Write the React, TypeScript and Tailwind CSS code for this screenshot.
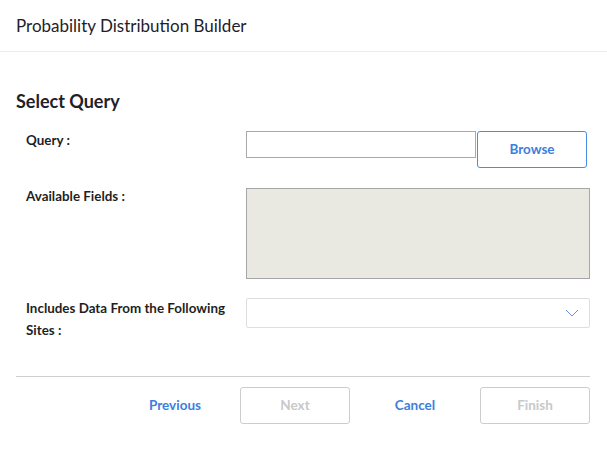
import React from "react";

const blue = "text-[#3b7ee0]";

function FieldRow({ label, children, className = "" }: { label: React.ReactNode; children: React.ReactNode; className?: string }) {
    return (
        <div className={`flex ${className}`}>
            <div className="-mt-[2px] w-[230px] shrink-0 pl-[10px] pr-4 text-[13.4px] font-bold leading-[22px] text-[#1f1f1f]">
                {label}
            </div>
            <div className="flex-1">{children}</div>
        </div>
    );
}

export default function App() {
    return (
        <div className="h-[453px] w-[607px] bg-white font-['Lato',sans-serif] text-[#1f2129]">
            {/* header */}
            <div className="flex h-[52px] items-center border-b border-[#ececec] px-4">
                <h1 className="text-[17px]">Probability Distribution Builder</h1>
            </div>

            <div className="pl-4 pr-[17px]">
                <h2 className="mt-[38px] text-[18px] font-bold leading-[22px]">Select Query</h2>

                <FieldRow label="Query :" className="mt-[19px]">
                    <div className="flex items-start gap-px">
                        <input className="h-[27px] w-[230px] border border-[#a9a9a9] bg-white outline-none" />
                        <button className={`h-[37px] w-[110px] rounded-[3px] border border-[#4a8be6] bg-white text-[13.5px] font-bold ${blue}`}>
                            Browse
                        </button>
                    </div>
                </FieldRow>

                <FieldRow label="Available Fields :" className="mt-[19px]">
                    <div className="mt-[1px] h-[91px] border border-[#a6a6a6] bg-[#e9e8e1]" />
                </FieldRow>

                <FieldRow label={<>Includes Data From the Following Sites :</>} className="mt-[20px]">
                    <div className="-mt-[1px] flex h-[30px] items-center justify-end rounded-[2px] border border-[#dedede] bg-white pr-[10px]">
                        <svg width="14" height="8" viewBox="0 0 14 8" fill="none">
                            <path d="M1 1l6 6 6-6" stroke="#6e8fe6" strokeWidth="1" />
                        </svg>
                    </div>
                </FieldRow>

                <div className="mt-[35px] border-t border-[#cfcfcf]" />

                <div className="mt-[10px] flex items-center justify-end">
                    <button className={`w-[130px] text-center text-[13.5px] font-bold ${blue}`}>Previous</button>
                    <button className="h-[37px] w-[110px] rounded-[3px] border border-[#cccccc] text-[13.5px] font-bold text-[#c8c8c8]">
                        Next
                    </button>
                    <button className={`w-[130px] text-center text-[13.5px] font-bold ${blue}`}>Cancel</button>
                    <button className="h-[37px] w-[110px] rounded-[3px] border border-[#cccccc] text-[13.5px] font-bold text-[#c8c8c8]">
                        Finish
                    </button>
                </div>
            </div>
        </div>
    );
}
